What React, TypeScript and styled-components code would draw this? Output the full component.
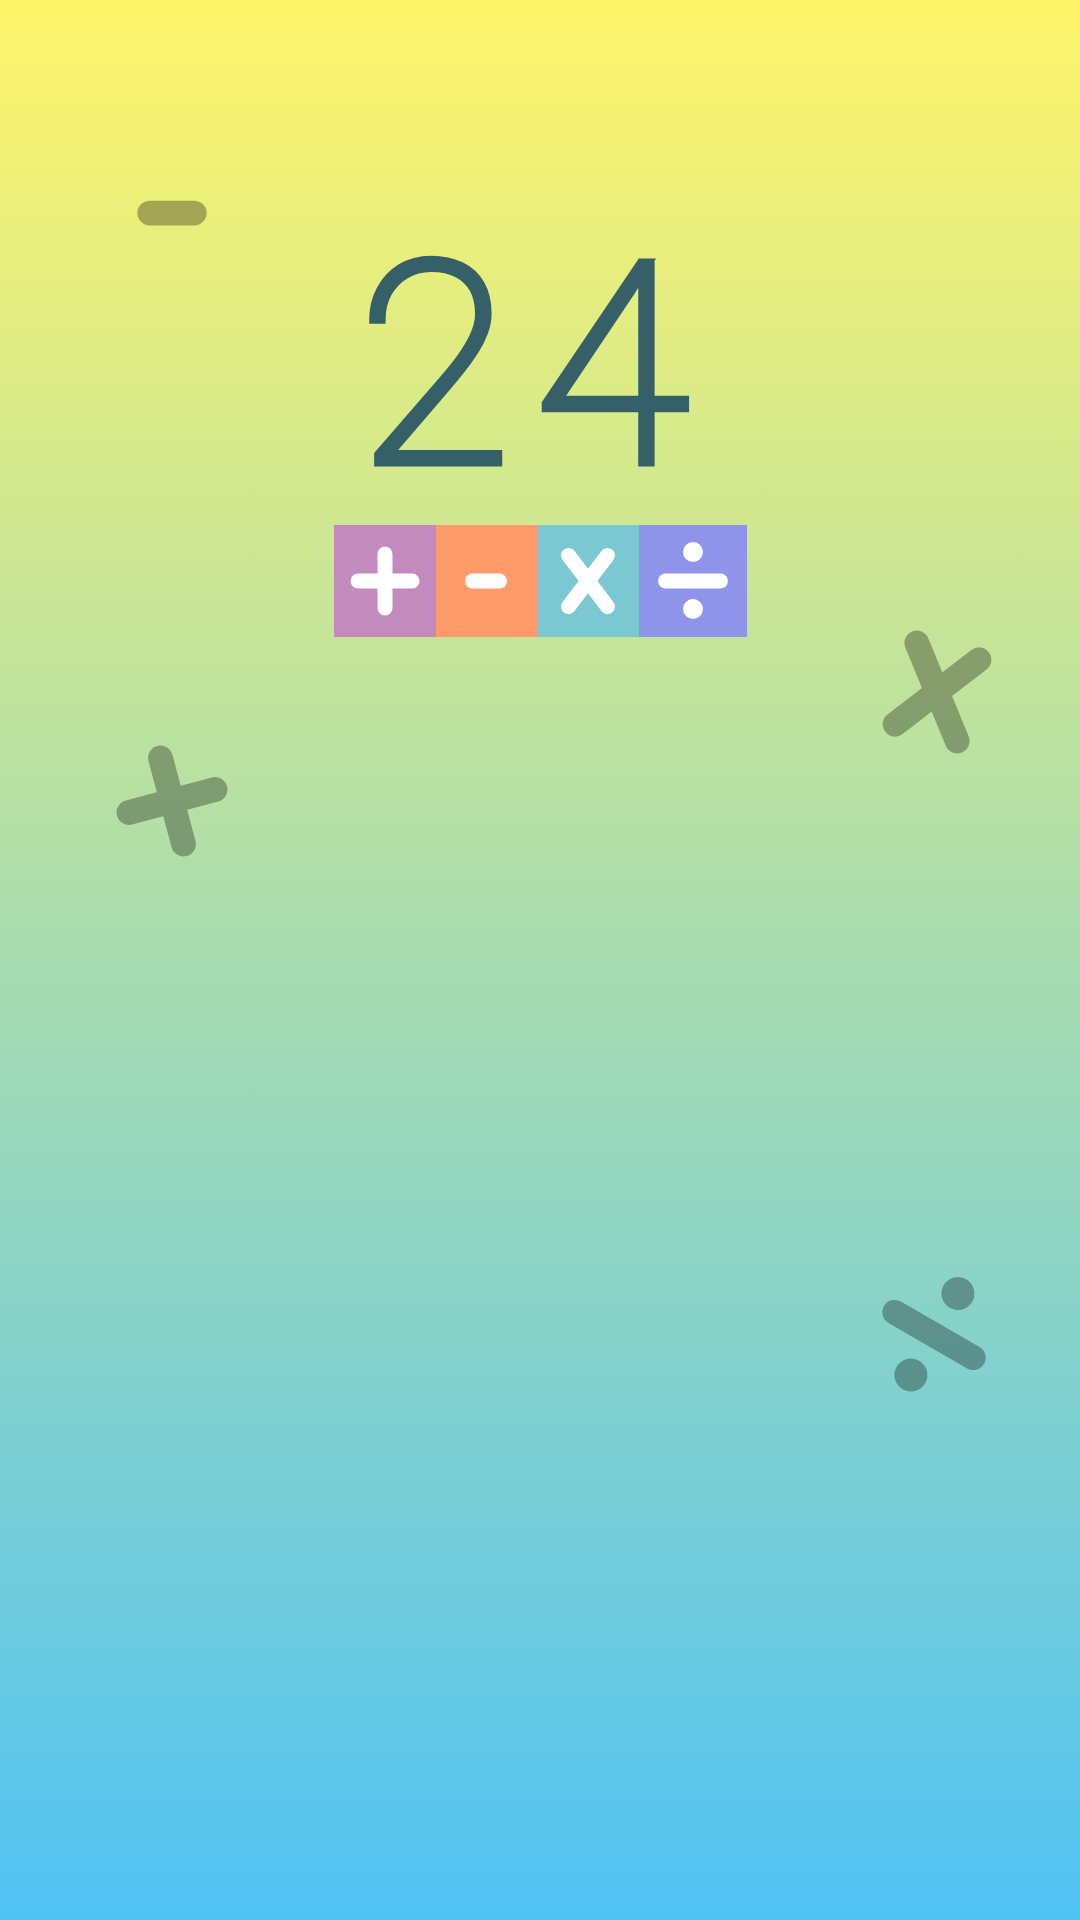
import React from "react";
import styled, { createGlobalStyle } from "styled-components";

const Global = createGlobalStyle`
  html, body { margin: 0; padding: 0; }
  body { font-family: Roboto, "Noto Sans", sans-serif; }
`;

const Screen = styled.div`
  position: relative;
  width: 1080px;
  height: 1920px;
  overflow: hidden;
  background: linear-gradient(180deg, #fff56a 0%, #50c3f5 100%);
  display: flex;
  flex-direction: column;
  align-items: center;
`;

const Title = styled.h1`
  margin: 219px 0 0 -10px;
  font-family: Roboto, "Noto Sans", sans-serif;
  font-weight: 100;
  font-size: 280px;
  line-height: 295px;
  height: 295px;
  color: #356068;
  -webkit-text-stroke: 9px #356068;
  letter-spacing: 24px;
`;

const OpRow = styled.div`
  margin-top: 11px;
  display: grid;
  grid-template-columns: 102px 101px 102px 108px;
  height: 112px;
`;

const OpTile = styled.button<{ $bg: string }>`
  border: none;
  padding: 0;
  margin: 0;
  background: ${(p) => p.$bg};
  display: flex;
  align-items: center;
  justify-content: center;
  cursor: pointer;
`;

const Deco = styled.div<{ $x: number; $y: number; $rot: number }>`
  position: absolute;
  left: ${(p) => p.$x}px;
  top: ${(p) => p.$y}px;
  width: 132px;
  height: 132px;
  margin: -66px 0 0 -66px;
  transform: rotate(${(p) => p.$rot}deg);
  opacity: 0.3;
  display: flex;
  align-items: center;
  justify-content: center;
`;

type Op = "plus" | "minus" | "times" | "divide";

const OpIcon: React.FC<{ op: Op; size: number; color: string }> = ({ op, size, color }) => {
  const common = {
    stroke: color,
    strokeWidth: 15,
    strokeLinecap: "round" as const,
    fill: "none",
  };
  return (
    <svg width={size} height={size} viewBox="-40 -40 80 80">
      {op === "plus" && (
        <>
          <line x1={-27} y1={0} x2={27} y2={0} {...common} />
          <line x1={0} y1={-27} x2={0} y2={27} {...common} />
        </>
      )}
      {op === "minus" && <line x1={-13.5} y1={0} x2={13.5} y2={0} {...common} />}
      {op === "times" && (
        <>
          <line x1={-19.5} y1={-25.5} x2={19.5} y2={25.5} {...common} />
          <line x1={19.5} y1={-25.5} x2={-19.5} y2={25.5} {...common} />
        </>
      )}
      {op === "divide" && (
        <>
          <line x1={-27.5} y1={0} x2={27.5} y2={0} {...common} />
          <circle cx={0} cy={-29} r={10} fill={color} />
          <circle cx={0} cy={28} r={10} fill={color} />
        </>
      )}
    </svg>
  );
};

const ops: { op: Op; bg: string }[] = [
  { op: "plus", bg: "#c28abd" },
  { op: "minus", bg: "#ff9a6b" },
  { op: "times", bg: "#7bc8d2" },
  { op: "divide", bg: "#8f94ea" },
];

const decos: { op: Op; x: number; y: number; rot: number }[] = [
  { op: "minus", x: 171.5, y: 212.5, rot: 0 },
  { op: "plus", x: 172, y: 801, rot: -15 },
  { op: "times", x: 937, y: 692, rot: 15 },
  { op: "divide", x: 934, y: 1334.5, rot: 30 },
];

export default function App() {
  return (
    <Screen>
      <Global />
      {decos.map((d) => (
        <Deco key={d.op} $x={d.x} $y={d.y} $rot={d.rot}>
          <OpIcon op={d.op} size={132} color="#000" />
        </Deco>
      ))}
      <Title>24</Title>
      <OpRow>
        {ops.map((o) => (
          <OpTile key={o.op} $bg={o.bg} aria-label={o.op}>
            <OpIcon op={o.op} size={80} color="#fff" />
          </OpTile>
        ))}
      </OpRow>
    </Screen>
  );
}
